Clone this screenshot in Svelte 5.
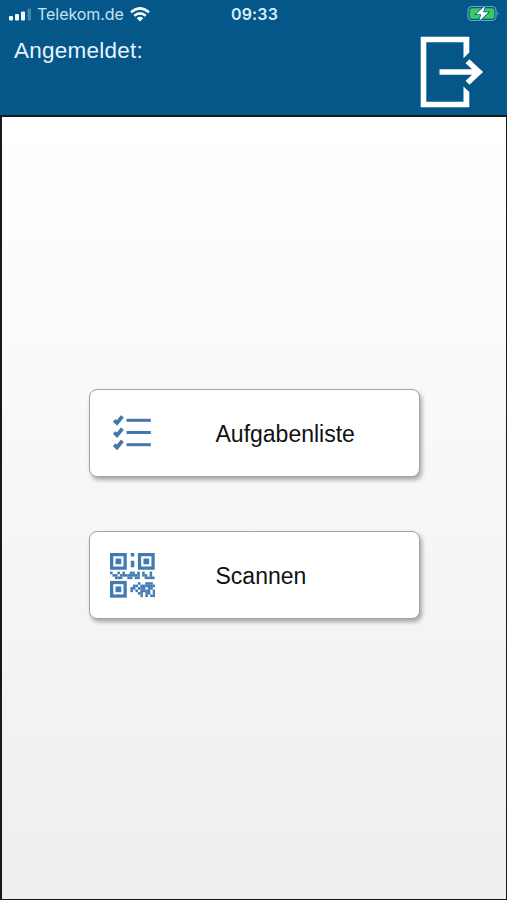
<script>
  // data modules of the code, the three finder squares are drawn apart
  const qrBlocks = [
    {
      left: 0,
      top: 18.2,
      rows: ["#..#.#..##.#.#..#.", ".##.########.##.#.", "..###..##.##..####"],
    },
    {
      left: 20,
      top: 28.5,
      rows: [
        "...#..###.",
        ".##.######",
        "##.###.##.",
        "#.#.####.#",
        "...##.##.#",
        "....#.#.##",
      ],
    },
  ];

  const size = 2.42;
  const cells = qrBlocks.flatMap((block) =>
    block.rows.flatMap((row, y) =>
      [...row]
        .map((c, x) => ({ c, x: block.left + x * size, y: block.top + y * size }))
        .filter((m) => m.c === "#"),
    ),
  );

  const finders = [
    [0, 0],
    [27.3, 0],
    [0, 27.3],
  ];

  const items = [
    { id: "tasks", label: "Aufgabenliste" },
    { id: "scan", label: "Scannen" },
  ];
</script>

<div class="app">
  <header>
    <div class="status">
      <div class="carrier">
        <svg class="signal" width="23" height="13" viewBox="0 0 23 13">
          <rect x="0" y="8" width="4" height="4.5" rx="1" />
          <rect x="6" y="6" width="4" height="6.5" rx="1" />
          <rect x="12" y="3.5" width="4" height="9" rx="1" />
          <rect class="off" x="18.5" y="0.5" width="3.5" height="12" rx="1" />
        </svg>
        <span class="name">Telekom.de</span>
        <svg class="wifi" width="20" height="15" viewBox="0 0 20 15">
          <path class="arc" d="M1 5.2Q10-2.6 19 5.2" />
          <path class="arc" d="M4.2 8.8Q10 3.8 15.8 8.8" />
          <path d="M6.7 11.2Q10 8.4 13.3 11.2L10 14.6Z" />
        </svg>
      </div>
      <span class="time">09:33</span>
      <svg class="battery" width="34" height="20" viewBox="0 0 34 20">
        <rect class="shell" x="2" y="2.5" width="28" height="14" rx="4" />
        <rect class="level" x="3.7" y="4.2" width="24.6" height="10.6" rx="2.5" />
        <path class="cap" d="M31.5 7.5Q33.5 9.5 31.5 11.5Z" />
        <path class="bolt" d="M19 1.7L10 10.3H15.2L13.2 17.3L22.5 8.2H17.2Z" />
      </svg>
    </div>
    <div class="user">
      <span>Angemeldet:</span>
      <button class="logout" aria-label="Abmelden">
        <svg width="64" height="72" viewBox="0 0 64 72">
          <path class="door" d="M0.7 0.7H49.3V16.5L43.5 22.3V6.3H6.3V65.7H43.5V50.5L49.3 56V71.3H0.7Z" />
          <path class="arrow" d="M19.5 36H58M47.5 25.3L59 36L47.5 46.7" />
        </svg>
      </button>
    </div>
  </header>

  <main>
    {#each items as item (item.id)}
      <button class="card">
        <span class="icon">
          {#if item.id === "tasks"}
            <svg class="tasks" width="38" height="36" viewBox="0 0 38 36">
              {#each [0, 12.2, 24.4] as y}
                <path class="check" d="M1.2 {y + 5.3}L4 {y + 8}L9.4 {y + 1.4}" />
                <path class="line" d="M13.5 {y + 5.3}H37.8" />
              {/each}
            </svg>
          {:else}
            <svg class="qr" width="45" height="45" viewBox="0 0 44 44">
              {#each finders as [x, y]}
                <rect class="ring" x={x + 1.6} y={y + 1.6} width="13.2" height="13.2" />
                <rect x={x + 5.4} y={y + 5.4} width="5.6" height="5.6" />
              {/each}
              <path d="M20.3 0h3.4v3.4h-3.4zM20.3 7.5h3.4v6.5h-3.4z" />
              {#each cells as m}
                <rect x={m.x} y={m.y} width={size + 0.1} height={size + 0.1} />
              {/each}
            </svg>
          {/if}
        </span>
        <span class="label">{item.label}</span>
      </button>
    {/each}
  </main>
</div>

<style>
  :global(body) {
    background: #045788;
  }

  .app {
    display: flex;
    flex-direction: column;
    height: 900px;
    font-family: "Liberation Sans", Arial, sans-serif;
  }

  button {
    font: inherit;
    padding: 0;
    border: 0;
    background: none;
  }

  svg {
    display: block;
    flex: none;
  }

  header {
    height: 115px;
    background: #045788;
    color: #e4f3ff;
  }

  .status {
    display: grid;
    grid-template-columns: 1fr auto 1fr;
    align-items: center;
    height: 28px;
    padding: 0 7px 0 9px;
    font-family: Inter, "Liberation Sans", sans-serif;
  }

  .carrier {
    display: flex;
    align-items: center;
  }

  .signal,
  .wifi {
    fill: #f2faff;
  }

  .signal .off {
    fill: #4285aa;
  }

  .name {
    width: 87px;
    margin: 0 6px 0 5px;
    font-size: 16px;
    letter-spacing: -0.05px;
    color: #c5e2f6;
    white-space: nowrap;
  }

  .wifi .arc {
    fill: none;
    stroke: #f2faff;
    stroke-width: 2.6;
  }

  .time {
    font-size: 16px;
    font-weight: 600;
    letter-spacing: 0.2px;
    color: #d7edfc;
  }

  .battery {
    justify-self: end;
  }

  .shell {
    fill: none;
    stroke: #6ca5bd;
    stroke-width: 1.2;
  }

  .level {
    fill: #35cf60;
  }

  .cap {
    fill: #6ca5bd;
  }

  .bolt {
    fill: #fff;
    stroke: #075980;
    stroke-width: 1.5;
    paint-order: stroke;
  }

  .user {
    display: flex;
    justify-content: space-between;
    padding: 8px 23px 0 14px;
    font-size: 22.5px;
    letter-spacing: 0.25px;
    line-height: 30px;
  }

  .logout .door {
    fill: #fff;
  }

  .logout .arrow {
    fill: none;
    stroke: #fff;
    stroke-width: 5.6;
  }

  main {
    flex: 1;
    box-sizing: border-box;
    display: flex;
    flex-direction: column;
    align-items: center;
    gap: 54px;
    padding-top: 272px;
    border: solid #151a1e;
    border-width: 2px 1px 1px 2px;
    background: linear-gradient(#fff, #efefef 95%);
  }

  .card {
    box-sizing: border-box;
    display: flex;
    align-items: center;
    width: 331px;
    height: 88px;
    border: 1px solid #a3a3a3;
    border-radius: 8px;
    background: #fff;
    box-shadow: 2px 3px 4px rgba(0, 0, 0, 0.32);
    color: #111;
    font-size: 23px;
  }

  .icon {
    display: flex;
    justify-content: center;
    width: 85px;
    margin-right: 41px;
  }

  .label {
    padding-top: 2px;
  }

  .tasks path {
    fill: none;
    stroke: #4278aa;
    stroke-width: 3;
  }

  .tasks .check {
    stroke-width: 3.8;
  }

  .qr {
    fill: #427bb0;
  }

  .qr .ring {
    fill: none;
    stroke: #427bb0;
    stroke-width: 3.2;
  }
</style>
